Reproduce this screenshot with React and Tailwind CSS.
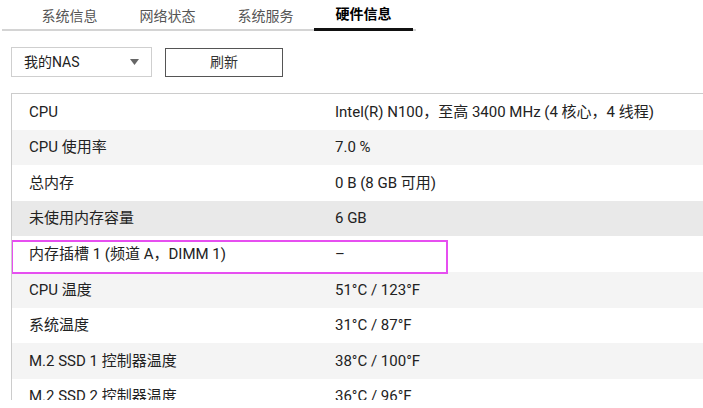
import { useState } from 'react'

const tabs = ['系统信息', '网络状态', '系统服务', '硬件信息']

const rows = [
  { label: 'CPU', value: 'Intel(R) N100，至高 3400 MHz (4 核心，4 线程)', bg: 'bg-white' },
  { label: 'CPU 使用率', value: '7.0 %', bg: 'bg-[#f4f4f4]' },
  { label: '总内存', value: '0 B (8 GB 可用)', bg: 'bg-white' },
  { label: '未使用内存容量', value: '6 GB', bg: 'bg-[#e9e9e9]' },
  { label: '内存插槽 1 (频道 A，DIMM 1)', value: '–', bg: 'bg-white' },
  { label: 'CPU 温度', value: '51°C / 123°F', bg: 'bg-[#f4f4f4]' },
  { label: '系统温度', value: '31°C / 87°F', bg: 'bg-white' },
  { label: 'M.2 SSD 1 控制器温度', value: '38°C / 100°F', bg: 'bg-[#f4f4f4]' },
  { label: 'M.2 SSD 2 控制器温度', value: '36°C / 96°F', bg: 'bg-white' },
]

const App = () => {
  const [active, setActive] = useState(3)

  return (
    <div className="w-[703px] h-[408px] bg-white overflow-hidden text-[#222] font-['Roboto','Noto_Sans_CJK_SC',sans-serif]">
      {/* Tabs */}
      <div className="flex pl-[18px] h-[31px] border-b-2 border-[#d4d4d4] w-[414px] ml-[2px]">
        {tabs.map((tab, i) => (
          <button
            key={tab}
            onClick={() => setActive(i)}
            className={
              'w-[99px] -ml-[1px] first:ml-0 h-[31px] -mb-[2px] text-[14px] leading-[28px] text-center ' +
              (i === active ? 'font-bold text-black border-b-[3px] border-[#111]' : 'text-[#555]')
            }
          >
            {tab}
          </button>
        ))}
      </div>

      {/* Toolbar */}
      <div className="flex items-center gap-[13px] pl-[11px] mt-[16px]">
        <div className="w-[141px] h-[30px] border border-[#cfcfcf] flex items-center justify-between pl-[12px] pr-[12px] text-[14px]">
          <span>我的NAS</span>
          <svg width="9" height="6" viewBox="0 0 9 6" className="text-[#666]">
            <path d="M0 0 L9 0 L4.5 6 Z" fill="currentColor" />
          </svg>
        </div>
        <button className="w-[118px] h-[29px] border border-[#555] text-[14px] text-[#333]">刷新</button>
      </div>

      {/* Table */}
      <div className="mt-[16px] ml-[11px] h-[307px] overflow-hidden border-t border-l border-[#cccccc] relative">
        {rows.map((row) => (
          <div key={row.label} className={'flex items-center h-[35.6px] text-[15px] ' + row.bg}>
            <div className="w-[323px] pl-[17px] shrink-0">{row.label}</div>
            <div className="whitespace-nowrap">{row.value}</div>
          </div>
        ))}
        <div className="absolute left-[-1px] top-[146px] w-[437px] h-[34px] border-2 border-[#e64ff0] pointer-events-none" />
      </div>
    </div>
  )
}

export default App
